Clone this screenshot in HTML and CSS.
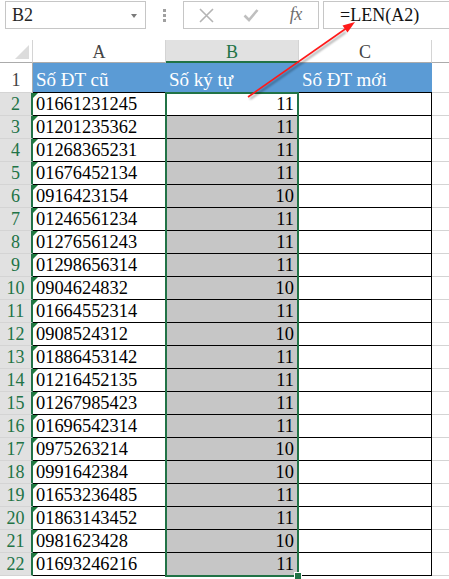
FILE: index.html
```html
<!DOCTYPE html>
<html>
<head>
<meta charset="utf-8">
<link rel="stylesheet" href="styles.css">
</head>
<body>
<div class="topbar">
  <div class="namebox">B2<span class="caret"></span></div>
  <div class="dots"><i></i><i></i><i></i></div>
  <div class="fxbox">
    <span class="slot"><svg width="15" height="15" viewBox="0 0 15 15"><path d="M1 1 L14 14 M14 1 L1 14" stroke="#b4b4b4" stroke-width="1.6" fill="none"/></svg></span>
    <span class="slot"><svg width="16" height="14" viewBox="0 0 16 14"><path d="M1.5 7.5 L6 12 L14.5 2" stroke="#bfbfbf" stroke-width="2.6" fill="none"/></svg></span>
    <span class="slot fx">fx</span>
  </div>
  <div class="formula">=LEN(A2)</div>
</div>

<div class="sheet-wrap">
<div class="sheet">
  <div class="corner"></div>
  <div class="ch">A</div>
  <div class="ch sel">B</div>
  <div class="ch">C</div>
  <div class="ch last"></div>

  <div class="rh first">1</div>
  <div class="hd">Số ĐT cũ</div>
  <div class="hd">Số ký tự</div>
  <div class="hd">Số ĐT mới</div>
  <div class="dc"></div>

  <div class="rh s">2</div><div class="c t">01661231245</div><div class="c n act">11</div><div class="c"></div><div class="dc"></div>
  <div class="rh s">3</div><div class="c t">01201235362</div><div class="c n">11</div><div class="c"></div><div class="dc"></div>
  <div class="rh s">4</div><div class="c t">01268365231</div><div class="c n">11</div><div class="c"></div><div class="dc"></div>
  <div class="rh s">5</div><div class="c t">01676452134</div><div class="c n">11</div><div class="c"></div><div class="dc"></div>
  <div class="rh s">6</div><div class="c t">0916423154</div><div class="c n">10</div><div class="c"></div><div class="dc"></div>
  <div class="rh s">7</div><div class="c t">01246561234</div><div class="c n">11</div><div class="c"></div><div class="dc"></div>
  <div class="rh s">8</div><div class="c t">01276561243</div><div class="c n">11</div><div class="c"></div><div class="dc"></div>
  <div class="rh s">9</div><div class="c t">01298656314</div><div class="c n">11</div><div class="c"></div><div class="dc"></div>
  <div class="rh s">10</div><div class="c t">0904624832</div><div class="c n">10</div><div class="c"></div><div class="dc"></div>
  <div class="rh s">11</div><div class="c t">01664552314</div><div class="c n">11</div><div class="c"></div><div class="dc"></div>
  <div class="rh s">12</div><div class="c t">0908524312</div><div class="c n">10</div><div class="c"></div><div class="dc"></div>
  <div class="rh s">13</div><div class="c t">01886453142</div><div class="c n">11</div><div class="c"></div><div class="dc"></div>
  <div class="rh s">14</div><div class="c t">01216452135</div><div class="c n">11</div><div class="c"></div><div class="dc"></div>
  <div class="rh s">15</div><div class="c t">01267985423</div><div class="c n">11</div><div class="c"></div><div class="dc"></div>
  <div class="rh s">16</div><div class="c t">01696542314</div><div class="c n">11</div><div class="c"></div><div class="dc"></div>
  <div class="rh s">17</div><div class="c t">0975263214</div><div class="c n">10</div><div class="c"></div><div class="dc"></div>
  <div class="rh s">18</div><div class="c t">0991642384</div><div class="c n">10</div><div class="c"></div><div class="dc"></div>
  <div class="rh s">19</div><div class="c t">01653236485</div><div class="c n">11</div><div class="c"></div><div class="dc"></div>
  <div class="rh s">20</div><div class="c t">01863143452</div><div class="c n">11</div><div class="c"></div><div class="dc"></div>
  <div class="rh s">21</div><div class="c t">0981623428</div><div class="c n">10</div><div class="c"></div><div class="dc"></div>
  <div class="rh s">22</div><div class="c t">01693246216</div><div class="c n">11</div><div class="c"></div><div class="dc"></div>
</div>
<div class="overlay">
  <div class="selection"></div>
</div>
</div>

<svg class="arrow" width="449" height="579" viewBox="0 0 449 579">
  <defs>
    <filter id="blur" x="-10%" y="-10%" width="120%" height="120%"><feGaussianBlur stdDeviation="1.2"/></filter>
  </defs>
  <g filter="url(#blur)" opacity="0.35">
    <line x1="250" y1="99" x2="346" y2="32" stroke="#000" stroke-width="2"/>
  </g>
  <line x1="248" y1="97" x2="346" y2="28.5" stroke="#ff1a1a" stroke-width="1.6"/>
  <polygon points="355,22 347.5,32.5 342.5,25.5" fill="#ff1a1a"/>
</svg>
</body>
</html>
```
FILE: styles.css
```css
body {
  margin: 0;
  width: 449px;
  height: 579px;
  overflow: hidden;
  background: #ffffff;
  font-family: "Liberation Serif", "Times New Roman", serif;
  position: relative;
}

.topbar {
  display: flex;
  align-items: flex-start;
  height: 29px;
  padding-top: 1px;
  box-sizing: border-box;
}

.namebox {
  margin-left: 5px;
  width: 141px;
  height: 28px;
  box-sizing: border-box;
  border: 1px solid #c6c6c6;
  display: flex;
  align-items: center;
  padding-left: 6px;
  font-size: 18px;
  color: #262626;
  position: relative;
}

.caret {
  position: absolute;
  right: 8px;
  top: 12px;
  width: 0;
  height: 0;
  border-left: 3.5px solid transparent;
  border-right: 3.5px solid transparent;
  border-top: 4px solid #7a7a7a;
}

.dots {
  width: 37px;
  display: flex;
  flex-direction: column;
  align-items: center;
  gap: 2px;
  padding-top: 8px;
}

.dots i {
  display: block;
  width: 3px;
  height: 3px;
  background: #a0a0a0;
}

.fxbox {
  width: 136px;
  height: 28px;
  box-sizing: border-box;
  border: 1px solid #c6c6c6;
  display: flex;
  align-items: center;
}

.slot {
  width: 45px;
  display: flex;
  justify-content: center;
  align-items: center;
}

.fx {
  font-style: italic;
  font-size: 18px;
  color: #6e6e6e;
  letter-spacing: -0.5px;
  padding-bottom: 2px;
}

.formula {
  flex: 1;
  margin-left: 4px;
  margin-right: -4px;
  height: 28px;
  box-sizing: border-box;
  border: 1px solid #c6c6c6;
  padding-left: 16px;
  font-size: 18px;
  line-height: 26px;
  color: #111;
}

.sheet-wrap {
  margin-top: 11px;
  display: grid;
}

.sheet,
.overlay {
  grid-area: 1 / 1;
  display: grid;
  grid-template-columns: 33px 133px 133px 133px 17px;
  grid-template-rows: 23px 30px repeat(21, 23px);
}

.overlay {
  pointer-events: none;
  z-index: 2;
}

.sheet > div {
  box-sizing: border-box;
  position: relative;
}

.corner {
  border-right: 1px solid #d4d4d4;
  border-bottom: 1px solid #ababab;
}

.corner::after {
  content: "";
  position: absolute;
  right: 3px;
  bottom: 3px;
  width: 0;
  height: 0;
  border-left: 14px solid transparent;
  border-bottom: 14px solid #dcdcdc;
}

.ch {
  border-right: 1px solid #d4d4d4;
  border-bottom: 1px solid #ababab;
  text-align: center;
  font-size: 18px;
  line-height: 22px;
  padding-top: 1px;
  color: #444;
}

.ch.sel {
  background: #e1e1e1;
  color: #217346;
  border-bottom: 2px solid #217346;
}

.ch.last {
  border-right: none;
}

.rh {
  border-right: 1px solid #ababab;
  border-bottom: 1px solid #d4d4d4;
  text-align: center;
  font-size: 18px;
  line-height: 22px;
  color: #444;
}

.rh.first {
  padding-top: 6px;
}

.rh.s {
  background: #e1e1e1;
  color: #217346;
  border-right: 2px solid #217346;
}

.hd {
  background: #5b9bd5;
  color: #ffffff;
  border-bottom: 1px solid #000;
  font-size: 19px;
  line-height: 22px;
  padding: 6px 3px 0;
  white-space: nowrap;
}

.c {
  border-right: 1px solid #000;
  border-bottom: 1px solid #000;
  font-size: 18.4px;
  line-height: 22px;
  padding: 0 3px;
  color: #000;
  white-space: nowrap;
}

.c.n {
  text-align: right;
  padding-right: 4px;
  background: #c6c6c6;
}

.c.n.act {
  background: #ffffff;
}

.c.t::before {
  content: "";
  position: absolute;
  left: 0;
  top: 0;
  width: 0;
  height: 0;
  border-top: 5px solid #1e7b3c;
  border-right: 5px solid transparent;
}

.dc {
  border-bottom: 1px solid #d4d4d4;
}

.selection {
  grid-column: 3;
  grid-row: 3 / 24;
  margin: -1px 0 -1px -1px;
  border: 2px solid #217346;
  position: relative;
}

.selection::after {
  content: "";
  position: absolute;
  right: -5px;
  bottom: -5px;
  width: 6px;
  height: 6px;
  background: #217346;
  border: 1px solid #ffffff;
}

.arrow {
  position: absolute;
  left: 0;
  top: 0;
  pointer-events: none;
  z-index: 5;
}
```
